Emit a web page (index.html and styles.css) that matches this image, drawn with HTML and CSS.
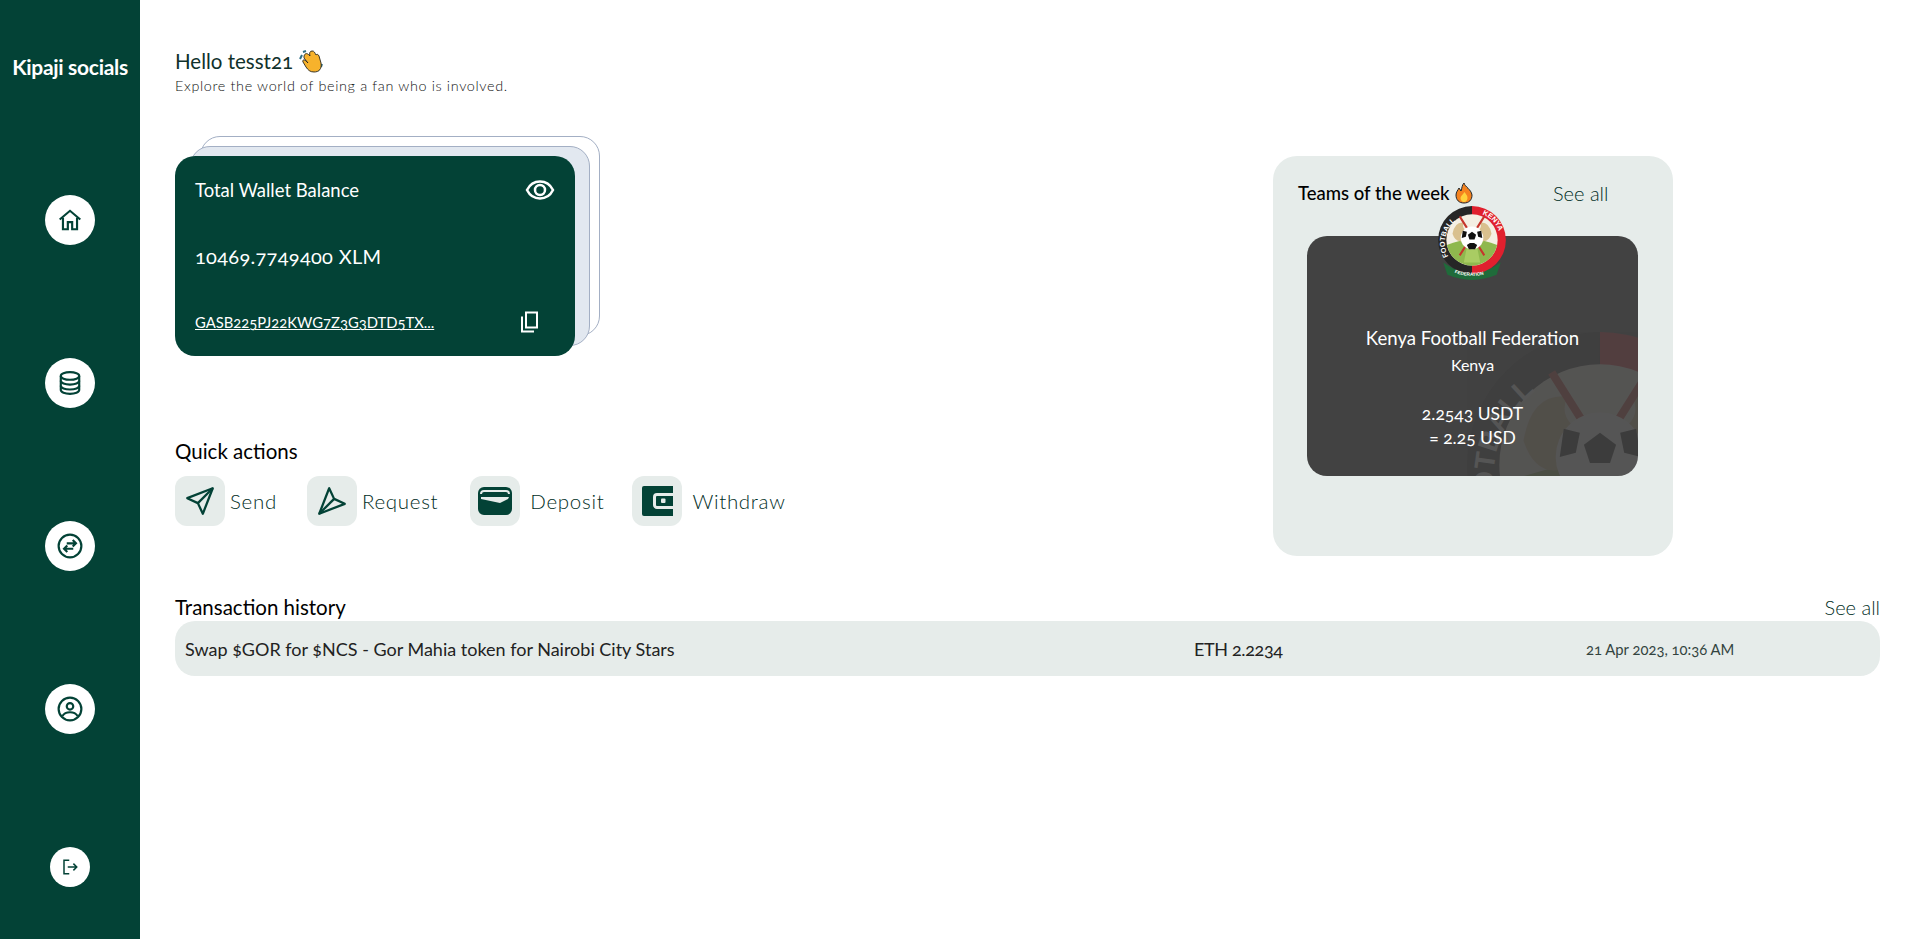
FILE: index.html
```html
<!DOCTYPE html>
<html lang="en">
<head>
    <meta charset="UTF-8">
    <meta name="viewport" content="width=device-width, initial-scale=1.0">
    <title>Kipaji socials</title>
    <link rel="stylesheet" href="styles.css">
</head>
<body>
    <svg class="defs" width="0" height="0">
        <defs>
            <path id="arcLeft" d="M13 52 A 27 27 0 0 1 34 12"/>
            <path id="arcRight" d="M46 11 A 27 27 0 0 1 63 42"/>
            <path id="arcBottom" d="M19 68 Q 36 74 53 68"/>
            <symbol id="crest" viewBox="0 0 72 76">
                <path d="M8 58 Q36 78 64 58 L60 70 Q36 80 12 70 Z" fill="#1f6b3a"/>
                <path d="M36 3 A33 33 0 0 0 36 69 Z" fill="#262626"/>
                <path d="M36 3 A33 33 0 0 1 36 69 Z" fill="#e0202e"/>
                <circle cx="36" cy="36" r="25" fill="#f4efe3"/>
                <path d="M11.500 41 Q36 30 60.500 41 A25 25 0 0 1 11.500 41 Z" fill="#8fb84e"/>
                <path d="M28 58 L32 38 L40 38 L44 58 Z" fill="#a9cc63"/>
                <path d="M17 30 q2 -12 11 -11 q-2 4 1 7 l-2 11 q-7 2 -10 -7 Z" fill="#d9c08e"/>
                <path d="M55 30 q-2 -12 -11 -11 q2 4 -1 7 l2 11 q7 2 10 -7 Z" fill="#d9c08e"/>
                <path d="M24 13 L48 51 M48 13 L24 51" stroke="#c6352c" stroke-width="2"/>
                <circle cx="36" cy="34" r="11" fill="#fff"/>
                <path d="M36 28l4 3-1.500 4.500h-5L32 31Z" fill="#111"/>
                <path d="M27 27l4 1-1 5-4 1ZM45 27l-4 1 1 5 4 1ZM31 41l3-2h4l3 2-2 4h-6Z" fill="#111"/>
                <text class="crest-text"><textPath href="#arcLeft">FOOTBALL</textPath></text>
                <text class="crest-text"><textPath href="#arcRight">KENYA</textPath></text>
                <text class="crest-text crest-small"><textPath href="#arcBottom">FEDERATION</textPath></text>
            </symbol>
        </defs>
    </svg>

    <div class="layout">
        <aside class="sidebar">
            <div class="brand">Kipaji socials</div>
            <nav class="side-nav">
                <a class="nav-btn">
                    <svg width="26" height="26" viewBox="0 0 24 24" class="line-icon"><path d="M2.500 11.500 12 3.500l9.500 8"/><path d="M5.500 10v10.500h4.500V14h4v6.500h4.500V10"/></svg>
                </a>
                <a class="nav-btn">
                    <svg width="26" height="26" viewBox="0 0 24 24" class="line-icon"><ellipse cx="12" cy="5.500" rx="8.500" ry="3.500"/><path d="M3.500 5.500v13c0 2 3.800 3.500 8.500 3.500s8.500-1.500 8.500-3.500v-13"/><path d="M3.500 10c0 2 3.800 3.500 8.500 3.500s8.500-1.500 8.500-3.500"/><path d="M3.500 14.500c0 2 3.800 3.500 8.500 3.500s8.500-1.500 8.500-3.500"/></svg>
                </a>
                <a class="nav-btn">
                    <svg width="26" height="26" viewBox="0 0 24 24" class="line-icon"><circle cx="12" cy="12" r="10.500"/><path d="M9 9.500h8.500M14.500 6.500l3 3-3 3" /><path d="M15 14.500H6.500M9.500 11.500l-3 3 3 3"/></svg>
                </a>
                <a class="nav-btn">
                    <svg width="26" height="26" viewBox="0 0 24 24" class="line-icon"><circle cx="12" cy="12" r="10.500"/><circle cx="12" cy="9.500" r="3"/><path d="M5 18.500c1.500-2.500 4-3.500 7-3.500s5.500 1 7 3.500"/></svg>
                </a>
                <a class="nav-btn nav-btn-small">
                    <svg width="18" height="18" viewBox="0 0 24 24" class="line-icon"><path d="M11 3H4v18h7"/><path d="M9 12h12M16.500 7.500 21 12l-4.500 4.500"/></svg>
                </a>
            </nav>
        </aside>

        <main class="main">
            <h1 class="hello">Hello tesst21
                <svg class="emoji" width="24" height="24" viewBox="0 0 24 24">
                    <path d="M3 6 1 10M7 2 4 3M20 19l-1 3M23 15l-1 3" stroke="#2f6f86" stroke-width="2" fill="none"/>
                    <path d="M5 7c1-3 3-3 5-1l1 1c-1-3 0-5 2-5 2-.5 3 2 4 4 1-1 2-1 3 1l2 7c1 6-2 9-7 9-4 0-6-2-8-5L4 13c-1-2 1-3 3-1L9 14 5 9Z" fill="#f7b22c" stroke="#26261f" stroke-width=".9"/>
                </svg>
            </h1>
            <p class="sub">Explore the world of being a fan who is involved.</p>

            <div class="top-row">
                <section class="left-col">
                    <div class="wallet-stack">
                        <div class="back-card back-far"></div>
                        <div class="back-card back-near"></div>
                        <div class="wallet-card">
                            <div class="wallet-row">
                                <span>Total Wallet Balance</span>
                                <svg width="30" height="22" viewBox="0 0 30 22" class="eye"><path d="M2 11C5 5 10 2.500 15 2.500S25 5 28 11c-3 6-8 8.500-13 8.500S5 17 2 11Z"/><circle cx="15" cy="11" r="5"/></svg>
                            </div>
                            <div class="wallet-amount">10469.7749400 XLM</div>
                            <div class="wallet-row">
                                <a class="wallet-address">GASB225PJ22KWG7Z3G3DTD5TX...</a>
                                <svg class="copy" width="22" height="24" viewBox="0 0 22 24"><path d="M7 2.500h11v15H7Z"/><path d="M3 6.500v15h12"/></svg>
                            </div>
                        </div>
                    </div>

                    <h2 class="section-title quick-title">Quick actions</h2>
                    <div class="quick-actions">
                        <a class="quick-item">
                            <span class="quick-icon"><svg width="34" height="34" viewBox="0 0 24 24" class="plane"><path d="M21 3 3 10l7.500 3.500L14 21Z"/><path d="M21 3 10.500 13.500"/></svg></span>
                            <span>Send</span>
                        </a>
                        <a class="quick-item gap-wide">
                            <span class="quick-icon"><svg width="34" height="34" viewBox="0 0 24 24" class="plane flip"><path d="M21 3 3 10l7.500 3.500L14 21Z"/><path d="M21 3 10.500 13.500"/></svg></span>
                            <span>Request</span>
                        </a>
                        <a class="quick-item gap-wide text-far deposit">
                            <span class="quick-icon"><svg width="34" height="28" viewBox="0 0 34 28"><rect x="0" y="0" width="34" height="28" rx="6" fill="#034236"/><path d="M3 7c0-2 1-3 3-3h22c2 0 3 1 3 3" fill="none" stroke="#e6ecea" stroke-width="2"/><path d="M3 10h28l-1 2-8 4-19-4Z" fill="#e6ecea"/></svg></span>
                            <span>Deposit</span>
                        </a>
                        <a class="quick-item gap-wide text-far withdraw">
                            <span class="quick-icon"><svg width="31" height="30" viewBox="0 0 31 30"><path d="M2 0h29v30H2a2 2 0 0 1-2-2V2a2 2 0 0 1 2-2Z" fill="#034236"/><path d="M31 8.500H15a2.500 2.500 0 0 0-2.500 2.500v8a2.500 2.500 0 0 0 2.500 2.500h16" fill="none" stroke="#e6ecea" stroke-width="3"/><rect x="19" y="12.500" width="4.500" height="4.500" rx="1" fill="#e6ecea"/></svg></span>
                            <span>Withdraw</span>
                        </a>
                    </div>
                </section>

                <section class="teams-panel">
                    <div class="teams-head">
                        <h2 class="teams-title">Teams of the week
                            <svg class="emoji" width="19" height="22" viewBox="0 0 19 22">
                                <path d="M9 1c1 4 7 6 8 12 0 5-3 8-8 8s-8-3-8-8c0-3 2-5 3-7l2 3c1-3 1-6 3-8Z" fill="#f5831f" stroke="#20262b" stroke-width="1"/>
                                <path d="M9.500 10c1 2 3 3 3 6 0 2-1.500 4-3.500 4s-3.500-2-3.500-4c0-2 2-3 4-6Z" fill="#ffd23c"/>
                            </svg>
                        </h2>
                        <a class="see-all">See all</a>
                    </div>
                    <div class="team-card">
                        <div class="team-bg">
                            <svg width="290" height="306"><use href="#crest"/></svg>
                        </div>
                        <svg class="team-logo" width="74" height="78"><use href="#crest"/></svg>
                        <div class="team-name">Kenya Football Federation</div>
                        <div class="team-country">Kenya</div>
                        <div class="team-price">2.2543 USDT</div>
                        <div class="team-price">= 2.25 USD</div>
                    </div>
                </section>
            </div>

            <section class="history">
                <div class="history-head">
                    <h2 class="section-title">Transaction history</h2>
                    <a class="see-all">See all</a>
                </div>
                <div class="tx-row">
                    <span>Swap $GOR for $NCS - Gor Mahia token for Nairobi City Stars</span>
                    <span class="tx-amount">ETH 2.2234</span>
                    <span class="tx-date">21 Apr 2023, 10:36 AM</span>
                </div>
            </section>
        </main>
    </div>
</body>
</html>
```

FILE: styles.css
```css
* { box-sizing: border-box; }
body { margin: 0; font-family: Lato, "Open Sans", sans-serif; color: #111; background: #fff; font-variant-numeric: oldstyle-nums; }
h1, h2, p { margin: 0; font-weight: 400; }
.defs { position: absolute; }
.layout { display: flex; min-height: 939px; }

.sidebar { width: 140px; flex-shrink: 0; background: #034236; display: flex; flex-direction: column; align-items: center; }
.brand { margin-top: 55px; color: #fff; font-size: 21px; font-weight: 700; line-height: 24px; letter-spacing: -0.3px; white-space: nowrap; }
.side-nav { margin-top: 116px; display: flex; flex-direction: column; align-items: center; gap: 113px; }
.nav-btn { width: 50px; height: 50px; border-radius: 50%; background: #fff; display: flex; align-items: center; justify-content: center; }
.nav-btn-small { width: 40px; height: 40px; }
.line-icon { fill: none; stroke: #034236; stroke-width: 2; }

.main { flex: 1; padding: 49px 40px 0 35px; min-width: 0; }
.hello { font-size: 20.500px; line-height: 24px; color: #10312b; display: flex; align-items: center; gap: 6px; }
.sub { font-size: 14.400px; line-height: 17px; margin-top: 4px; color: #111; font-weight: 300; letter-spacing: 0.65px; }
.emoji { flex-shrink: 0; }

.top-row { display: grid; grid-template-columns: 1fr 400px; padding-right: 207px; margin-top: 62px; height: 400px; }
.wallet-stack { position: relative; width: 400px; height: 200px; }
.back-card { position: absolute; width: 400px; height: 200px; border-radius: 20px; border: 1px solid #a3afc4; }
.back-far { left: 25px; top: -20px; background: #fff; }
.back-near { left: 15px; top: -10px; background: #e2e8f0; }
.wallet-card { position: absolute; inset: 0; border-radius: 20px; background: #034236; color: #fff; padding: 23px 20px 22px; display: flex; flex-direction: column; justify-content: space-between; font-size: 18.500px; }
.wallet-row { display: flex; justify-content: space-between; align-items: center; }
.wallet-amount { font-size: 20px; letter-spacing: 0.3px; }
.wallet-address { font-size: 14.800px; color: #fff; text-decoration: underline; }
.eye { fill: none; stroke: #fff; stroke-width: 2.500; }
.copy { fill: none; stroke: #fff; stroke-width: 2; margin-right: 14px; }

.section-title { font-size: 20.500px; line-height: 24px; color: #000; }
.quick-title { margin-top: 83px; }
.quick-actions { display: flex; margin-top: 13px; }
.quick-item { display: flex; align-items: center; gap: 5px; font-size: 20.500px; font-weight: 300; color: #012e26; letter-spacing: 0.7px; }
.gap-wide { margin-left: 30px; }
.text-far { gap: 10px; }
.deposit { margin-left: 32px; }
.withdraw { margin-left: 28px; }
.quick-icon { width: 50px; height: 50px; border-radius: 12px; background: #e6ecea; display: flex; align-items: center; justify-content: center; }
.plane { fill: none; stroke: #034236; stroke-width: 1.600; stroke-linejoin: round; }
.flip { transform: rotate(180deg); }

.teams-panel { background: #e6ecea; border-radius: 24px; padding: 25px 25px 0; height: 400px; }
.teams-head { display: flex; align-items: center; height: 24px; }
.teams-title { font-size: 18.500px; font-weight: 500; color: #000; display: flex; align-items: center; gap: 5px; width: 255px; }
.see-all { font-size: 20px; font-weight: 300; color: #012e26; }
.team-card { position: relative; width: 331px; height: 240px; margin: 31px 0 0 9px; border-radius: 20px; background: #424242; color: #fff; text-align: center; padding-top: 90px; }
.team-bg { position: absolute; inset: 0; border-radius: 20px; overflow: hidden; }
.team-bg svg { position: absolute; left: 148px; top: 84px; opacity: 0.1; }
.team-logo { position: absolute; left: 128px; top: -33px; }
.crest-text { font-size: 7px; font-weight: 700; fill: #fff; font-family: "Liberation Sans", sans-serif; }
.crest-small { font-size: 4.500px; }
.team-name { position: relative; font-size: 18.600px; line-height: 24px; }
.team-country { position: relative; font-size: 16px; line-height: 20px; margin: 5px 0 27px; }
.team-price { position: relative; font-size: 17.500px; line-height: 24px; }

.history { margin-top: 36px; }
.history-head { display: flex; justify-content: space-between; align-items: center; height: 29px; }
.tx-row { display: grid; grid-template-columns: 1009px 392px 1fr; align-items: center; height: 55px; padding-left: 10px; border-radius: 20px; background: #e6ecea; font-size: 18px; color: #222; }
.tx-amount { letter-spacing: -0.35px; }
.tx-date { font-size: 14.800px; color: #33443f; }
```
